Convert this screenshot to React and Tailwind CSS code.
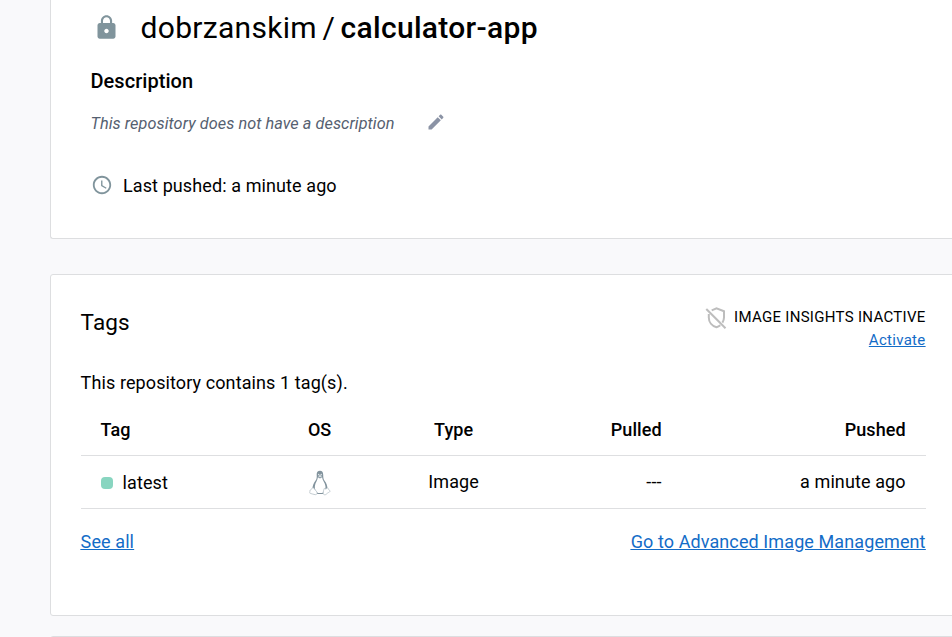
import React from 'react';

function LockIcon() {
  return (
    <svg className="h-[27px] w-[27px] shrink-0" viewBox="0 0 24 24" fill="#80949c">
      <path d="M18 8h-1V6c0-2.760-2.240-5-5-5S7 3.240 7 6v2H6c-1.100 0-2 .9-2 2v10c0 1.100.9 2 2 2h12c1.100 0 2-.9 2-2V10c0-1.100-.9-2-2-2zm-6 9c-1.100 0-2-.9-2-2s.9-2 2-2 2 .9 2 2-.9 2-2 2zm3.100-9H8.900V6c0-1.710 1.390-3.100 3.100-3.100 1.710 0 3.100 1.390 3.100 3.100v2z" />
    </svg>
  );
}

function PencilIcon() {
  return (
    <svg className="mb-[2px] h-5 w-5 shrink-0" viewBox="0 0 24 24" fill="#8b93a5">
      <path d="M3 17.250V21h3.750L17.810 9.940l-3.750-3.750L3 17.250zM20.710 7.040c.39-.39.39-1.020 0-1.410l-2.340-2.340c-.39-.39-1.020-.39-1.410 0l-1.830 1.830 3.750 3.750 1.830-1.830z" />
    </svg>
  );
}

function ClockIcon() {
  return (
    <svg className="h-[22px] w-[22px] shrink-0" viewBox="0 0 24 24" fill="#80949c">
      <path d="M11.990 2C6.470 2 2 6.480 2 12s4.470 10 9.990 10C17.520 22 22 17.520 22 12S17.520 2 11.990 2zM12 20c-4.420 0-8-3.580-8-8s3.580-8 8-8 8 3.580 8 8-3.580 8-8 8zm.5-13H11v6l5.250 3.150.75-1.230-4.500-2.670z" />
    </svg>
  );
}

function ShieldOffIcon() {
  return (
    <svg className="mt-[2px] h-6 w-6 shrink-0" viewBox="0 0 24 24" fill="none" stroke="#bdbdbd" strokeWidth="2">
      <path d="M2.300 3 21.500 22.200" />
      <path d="M7.700 4.300 12.500 2.300 20 5.200V11.500c0 1.800-.6 3.500-1.600 5.100" />
      <path d="M4.800 8v3.500c0 4.600 3.100 8.500 7.700 9.700 1.500-.4 2.700-1 3.800-1.900" />
    </svg>
  );
}

function LinuxIcon() {
  return (
    <svg className="mt-[2px] h-[26px] w-[22px]" viewBox="0 0 22 26">
      <path d="M11 .8C8.700.8 7.600 2.400 7.700 4.700c.1 2.700.2 4-1.300 6.100-1.700 2.300-2.900 5.100-3 8.200L8 24h6.200l4.300-4.800c0-3.300-1.100-6-2.900-8.400-1.400-2-1.300-3.600-1.400-6.100C14.100 2.200 13.200.8 11 .8z" fill="#82939d" />
      <path d="M8.900 7.300c-.2 2.800-2.600 5.400-3 8.700-.3 2.700.7 6.100 3.200 6.900h4c2.700-.8 3.700-4.200 3.300-6.900-.5-3.400-3-5.600-3.300-8.700L11 8.500z" fill="#fff" />
      <path d="m9 5.900 2-1 2.200 1L11 7.500z" fill="#d6dee2" />
      <circle cx="9.700" cy="4.400" r=".7" fill="#e8edef" />
      <circle cx="12.200" cy="4.400" r=".7" fill="#e8edef" />
      <path d="M3.600 17.800c1.500 0 2.500 2 4.100 4 .9 1.300.3 2.900-1.400 2.900-1.600 0-3.100-1.100-5-1.300-.8-.1-.5-1.100-.4-2 0-.7-.2-1.300.6-1.400 1.100-.1 1.200-2.200 2.100-2.200zM18.400 17.800c.8 0 .8 1.400 1.500 2 .7.600 1.300.9 1.200 1.500-.2.800-2.700 1.500-3.700 2.800-1 1.100-3.200.9-3.200-.9 0-1.200.5-3.700 1.100-4.800.6.900 2.200.8 3.100-.6z" fill="#fff" stroke="#b5c0c6" strokeWidth=".8" />
    </svg>
  );
}

const COLUMNS = 'grid grid-cols-[205px_68px_200px_128px_1fr] items-center border-b border-[#dedfe1]';

export default function App() {
  return (
    <div className="flex h-[637px] w-[952px] flex-col gap-[35px] overflow-hidden bg-[#f9f9fb] pl-[50px] font-['Roboto',sans-serif] text-[18px] tracking-[0.100px] text-black">
      <section className="h-[239px] w-[920px] shrink-0 rounded-bl-[3px] border-b border-l border-[#dddee0] bg-white pl-[39.500px]">
        <div className="flex h-[55px] items-center pl-[2px]">
          <LockIcon />
          <h1 className="ml-[21px] text-[30px] leading-[36px] tracking-[0.300px] whitespace-pre">
            dobrzanskim<span className="mx-[5.500px]">/</span><span className="font-medium">calculator-app</span>
          </h1>
        </div>
        <h2 className="flex h-[52px] items-center text-[20px] font-medium tracking-[0.040px]">Description</h2>
        <div className="flex h-8 items-center">
          <p className="w-[335.500px] pt-[2px] text-[16.250px] tracking-[0.060px] text-[#556070] italic">This repository does not have a description</p>
          <PencilIcon />
        </div>
        <div className="mt-7 flex h-9 items-center gap-[10px] pl-[0.500px]">
          <ClockIcon />
          <span className="pt-px">Last pushed: a minute ago</span>
        </div>
      </section>

      <section className="h-[342px] w-[920px] shrink-0 rounded-l-[3px] border border-[#dddee0] bg-white pl-[29.600px]">
        <div className="w-[845px]">
          <div className="flex h-[87px] justify-between pt-[30px]">
            <h2 className="-mt-px text-[22.500px] leading-[36px]">Tags</h2>
            <div className="flex flex-col items-end">
              <div className="flex h-6 items-center gap-[6px] text-[15px] tracking-[0.300px]">
                <ShieldOffIcon />
                <span>IMAGE INSIGHTS INACTIVE</span>
              </div>
              <a className="text-[15px] leading-[23px] tracking-[0.300px] text-[#136cc7] underline">Activate</a>
            </div>
          </div>
          <p className="flex h-[40px] items-center">This repository contains 1 tag(s).</p>
          <div className={`${COLUMNS} h-[54px] pt-px font-medium tracking-[0.050px]`}>
            <span className="pl-5">Tag</span>
            <span className="text-center">OS</span>
            <span className="text-center">Type</span>
            <span className="pr-5 text-right">Pulled</span>
            <span className="pr-5 text-right">Pushed</span>
          </div>
          <div className={`${COLUMNS} h-[53px]`}>
            <span className="flex items-center gap-[10px] pl-5">
              <i className="mt-px h-3 w-3 rounded-[4px] bg-[#88d5c0]" />
              latest
            </span>
            <span className="flex justify-center"><LinuxIcon /></span>
            <span className="-mt-[2px] text-center">Image</span>
            <span className="-mt-[2px] pr-5 text-right">---</span>
            <span className="-mt-[2px] pr-5 text-right">a minute ago</span>
          </div>
          <div className="flex h-[64px] items-center justify-between text-[#136cc7] underline">
            <a>See all</a>
            <a>Go to Advanced Image Management</a>
          </div>
        </div>
      </section>

      <section className="-mt-[15px] h-10 w-[920px] shrink-0 rounded-tl-[3px] border border-[#dddee0] bg-white" />
    </div>
  );
}
